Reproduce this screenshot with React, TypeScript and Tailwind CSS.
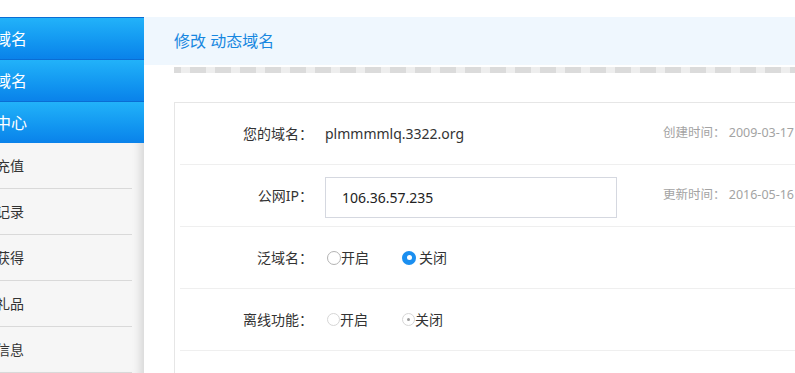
import React from "react";

const FONT = "font-['Noto_Sans','Noto_Sans_CJK_SC',sans-serif]";

const blueItems = ["动态域名", "静态域名", "用户中心"];
const grayItems = ["在线充值", "消费记录", "积分获得", "兑换礼品", "个人信息"];

function Radio({ checked, disabled }: { checked?: boolean; disabled?: boolean }) {
  if (disabled) {
    return (
      <span className="ml-[2px] w-[13px] h-[13px] rounded-full border border-[#d6d6d6] bg-white flex items-center justify-center shrink-0">
        {checked && <span className="w-[3px] h-[3px] rounded-full bg-[#9a9a9a]" />}
      </span>
    );
  }
  if (checked) {
    return (
      <span className="ml-[2px] w-[14px] h-[14px] rounded-full bg-[#1b8ff0] flex items-center justify-center shrink-0 mr-[3px]">
        <span className="w-[5px] h-[5px] rounded-full bg-white" />
      </span>
    );
  }
  return <span className="ml-[2px] w-[14px] h-[14px] rounded-full border border-[#b3b3b3] bg-white shrink-0" />;
}

function Row({ label, children, info, last }: { label: string; children: React.ReactNode; info?: string; last?: boolean }) {
  return (
    <div className={"h-[62px] flex items-center whitespace-nowrap " + (last ? "" : "border-b border-[#efefef]")}>
      <div className="w-[133px] text-right text-[14px] text-[#333]">{label}</div>
      <div className="ml-[12px] w-[292px] shrink-0 flex items-center">{children}</div>
      {info && <div className="ml-[46px] text-[12.5px] text-[#a3a3a3]">{info}</div>}
    </div>
  );
}

export default function App() {
  return (
    <div className={`w-[795px] h-[373px] overflow-hidden bg-white pt-[17px] flex ${FONT}`}>
      {/* Sidebar */}
      <aside className="w-[144px] shrink-0 flex flex-col overflow-hidden">
        {blueItems.map(t => (
          <div key={t}
            className="h-[42px] shrink-0 flex items-center border-t border-[#0a6dd4] bg-gradient-to-b from-[#22b2f9] to-[#0a82ea] text-white text-[16px] whitespace-nowrap">
            <span className="ml-[-37px]">{t}</span>
          </div>
        ))}
        <div className="flex-1 bg-[#f6f6f6] shadow-[inset_-10px_0_8px_-6px_rgba(0,0,0,0.12)]">
          {grayItems.map(t => (
            <div key={t} className="h-[46px] mr-[12px] flex items-center border-b border-[#d9d9d9] text-[14px] text-[#333] whitespace-nowrap">
              <span className="ml-[-32px]">{t}</span>
            </div>
          ))}
        </div>
      </aside>

      {/* Main */}
      <main className="flex-1 min-w-0">
        <div className="h-[48px] bg-[#eff7fe] pl-[30px] flex items-center text-[16px] text-[#1787e0]">
          修改 动态域名
        </div>
        <div className="ml-[30px] mt-[2px] h-[6px] bg-[repeating-linear-gradient(90deg,#dbdbdb_0_7px,#eeeeee_7px_16px,#dbdbdb_16px_25px)]" />

        <div className="ml-[30px] mt-[29px] w-[700px] border-l border-t border-[#e6e6e6] pl-[5px]">
          <Row label="您的域名：" info="创建时间： 2009-03-17">
            <span className="text-[14px] text-[#333]">plmmmmlq.3322.org</span>
          </Row>
          <Row label="公网IP：" info="更新时间： 2016-05-16">
            <div className="w-[292px] h-[41px] mt-[3px] border border-[#d5d8e0] flex items-center pl-[16px] text-[14px] text-[#222]">
              106.36.57.235
            </div>
          </Row>
          <Row label="泛域名：">
            <label className="flex items-center text-[14px] text-[#333] w-[75px]">
              <Radio />开启
            </label>
            <label className="flex items-center text-[14px] text-[#333]">
              <Radio checked />关闭
            </label>
          </Row>
          <Row label="离线功能：">
            <label className="flex items-center text-[14px] text-[#333] w-[75px]">
              <Radio disabled />开启
            </label>
            <label className="flex items-center text-[14px] text-[#333]">
              <Radio disabled checked />关闭
            </label>
          </Row>
          <Row label="" last>
            <div className="w-[292px] h-[41px] mt-[24px] border border-[#d5d8e0]" />
          </Row>
        </div>
      </main>
    </div>
  );
}
